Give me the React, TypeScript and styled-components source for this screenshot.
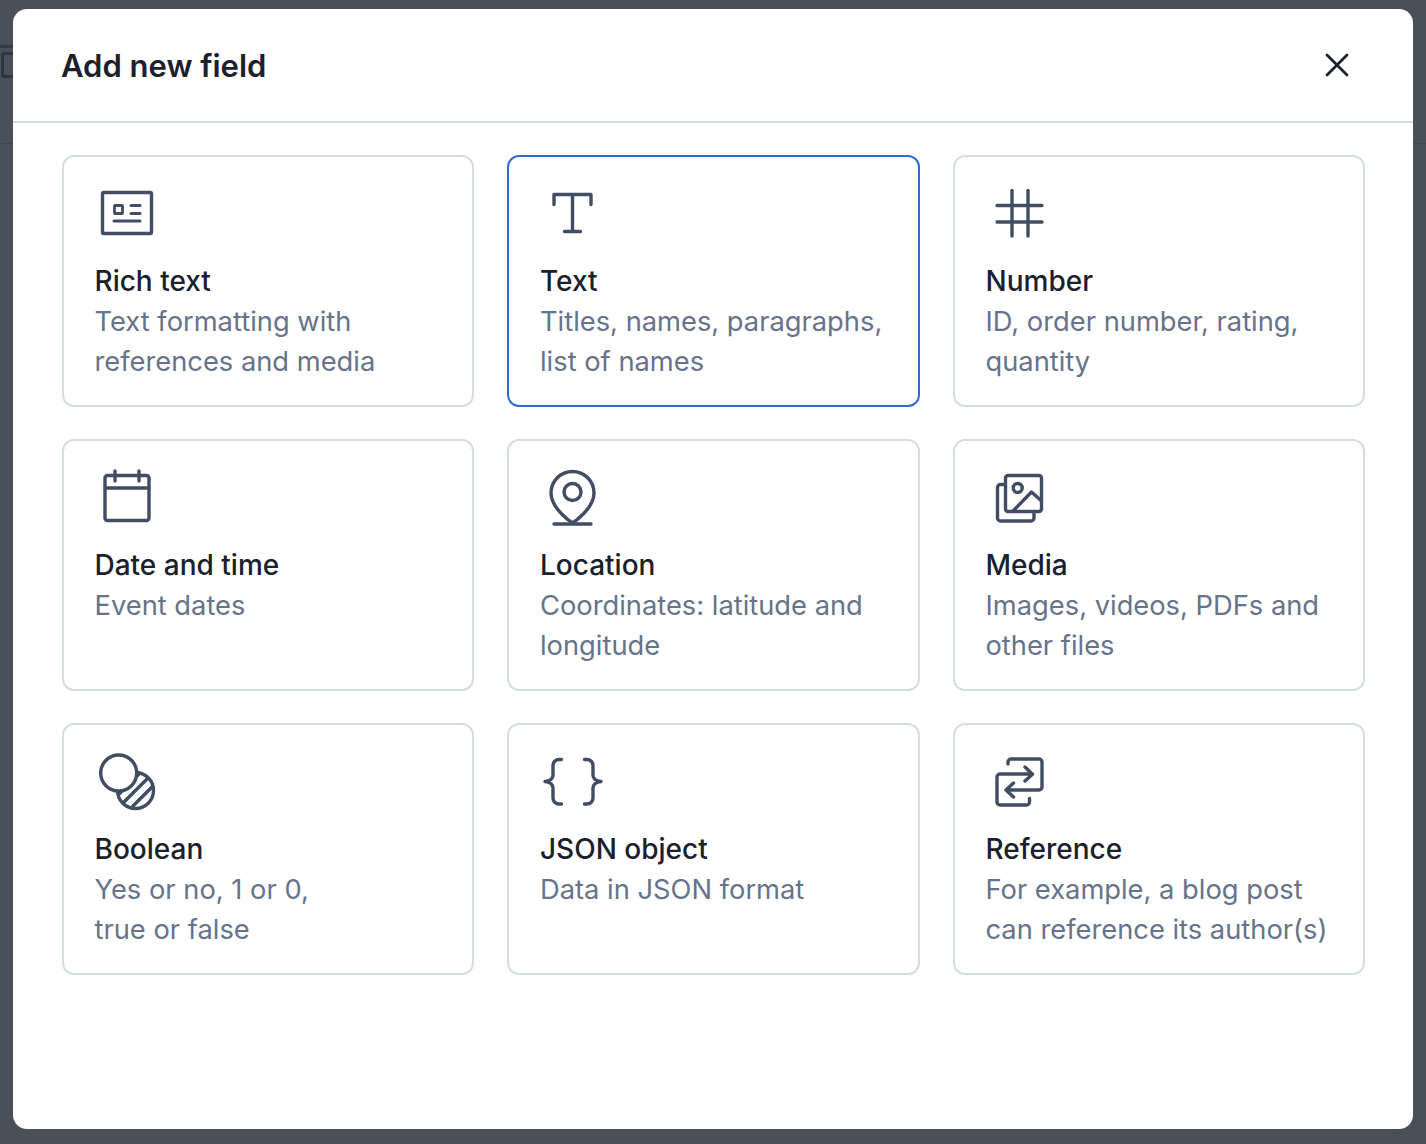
import { ReactNode } from 'react';
import styled, { createGlobalStyle } from 'styled-components';

const GlobalStyle = createGlobalStyle`
  html, body {
    margin: 0;
    padding: 0;
    background: #4a4f58;
  }
  * {
    box-sizing: border-box;
  }
`;

const Icon = ({ children }: { children: ReactNode }) => (
  <IconSvg viewBox="0 0 64 64" fill="none" stroke="#414d63" strokeWidth={3.4} strokeLinecap="round" strokeLinejoin="round">
    {children}
  </IconSvg>
);

const fields = [
  {
    title: 'Rich text',
    lines: ['Text formatting with', 'references and media'],
    icon: (
      <>
        <rect x="7.5" y="11.5" width="49" height="41" rx="1.5" />
        <rect x="19.5" y="24.5" width="8" height="8" rx="0.5" strokeWidth={2.8} />
        <path d="M36 24.5h9M36 32.500h9M19 40h26" strokeWidth={3} />
      </>
    ),
  },
  {
    title: 'Text',
    lines: ['Titles, names, paragraphs,', 'list of names'],
    selected: true,
    icon: <path d="M14 23.500V13.500h37v10M32.500 13.500V50.500M24.500 50.500h16" />,
  },
  {
    title: 'Number',
    lines: ['ID, order number, rating,', 'quantity'],
    icon: <path d="M11 24.500h45M11 41h45M26 9.500v45.500M42 9.500v45.500" />,
  },
  {
    title: 'Date and time',
    lines: ['Event dates'],
    icon: (
      <>
        <rect x="10" y="10.500" width="44" height="45" rx="2.5" />
        <path d="M10 23h44M20 6v10M44 6v10" />
      </>
    ),
  },
  {
    title: 'Location',
    lines: ['Coordinates: latitude and', 'longitude'],
    icon: (
      <>
        <path d="M32.500 58C32.500 58 11 44 11 28a21.500 21.500 0 0 1 43 0C54 44 32.500 58 32.500 58Z" />
        <circle cx="32.500" cy="27" r="8.500" />
        <path d="M14 59h37" />
      </>
    ),
  },
  {
    title: 'Media',
    lines: ['Images, videos, PDFs and', 'other files'],
    icon: (
      <>
        <rect x="19.500" y="10.500" width="36" height="36" rx="2.5" />
        <path d="M18 19.500h-3.500a3 3 0 0 0-3 3V53a3 3 0 0 0 3 3H45a3 3 0 0 0 3-3v-5" />
        <circle cx="31.700" cy="23" r="4.500" />
        <path d="M27 46l18.500-19 9.500 8.500" />
      </>
    ),
  },
  {
    title: 'Boolean',
    lines: ['Yes or no, 1 or 0,', 'true or false'],
    icon: (
      <>
        <defs>
          <clipPath id="boolean-clip">
            <circle cx="40.500" cy="41.500" r="18" />
          </clipPath>
        </defs>
        <g clipPath="url(#boolean-clip)">
          <path d="M14 55L54 15M25 57L65 17M38 57L78 17" />
        </g>
        <circle cx="40.500" cy="41.500" r="18" />
        <circle cx="23.700" cy="24" r="18" fill="#fff" />
      </>
    ),
  },
  {
    title: 'JSON object',
    lines: ['Data in JSON format'],
    icon: (
      <>
        <path d="M21.500 10.500H19a6 6 0 0 0-6 6V26c0 3-2.500 6-8 6.500 5.500.5 8 3.500 8 6.500v10a6 6 0 0 0 6 6h2.500" />
        <path d="M44.500 10.500H47a6 6 0 0 1 6 6V26c0 3 2.500 6 8 6.500-5.500.5-8 3.500-8 6.500v10a6 6 0 0 1-6 6h-2.500" />
      </>
    ),
  },
  {
    title: 'Reference',
    lines: ['For example, a blog post', 'can reference its author(s)'],
    icon: (
      <>
        <path d="M22 15v-2a3 3 0 0 1 3-3h28a3 3 0 0 1 3 3v25a3 3 0 0 1-3 3H20M27.500 34L20 41l7.500 7" />
        <path d="M43.500 49.500V53a3 3 0 0 1-3 3H14a3 3 0 0 1-3-3V28a3 3 0 0 1 3-3h32.500M39 18l7.500 7.300L39 32" />
      </>
    ),
  },
];

function App() {
  return (
    <Page>
      <GlobalStyle />
      <BackdropBar />
      <BackdropBox />
      <BackdropLine />
      <Modal>
        <Header>
          <Title>Add new field</Title>
          <CloseButton aria-label="Close">
            <svg width="24" height="24" viewBox="0 0 24 24" fill="none" stroke="#1a202c" strokeWidth={2.8} strokeLinecap="round">
              <path d="M2 2l20 20M22 2L2 22" />
            </svg>
          </CloseButton>
        </Header>
        <Grid>
          {fields.map((f) => (
            <Card key={f.title} $selected={f.selected}>
              <Icon>{f.icon}</Icon>
              <CardTitle>{f.title}</CardTitle>
              {f.lines.map((l) => (
                <CardLine key={l}>{l}</CardLine>
              ))}
            </Card>
          ))}
        </Grid>
      </Modal>
    </Page>
  );
}

const Page = styled.div`
  position: relative;
  width: 1426px;
  height: 1144px;
  padding: 9px 13px 15px;
  overflow: hidden;
  background: #4a4f58;
  font-family: Inter, "Liberation Sans", sans-serif;
`;

const BackdropBar = styled.div`
  position: absolute;
  left: 0;
  top: 45px;
  width: 20px;
  height: 3px;
  background: #343a46;
`;

const BackdropBox = styled.div`
  position: absolute;
  left: 1px;
  top: 52px;
  width: 20px;
  height: 26px;
  border: 3px solid #2f3541;
  border-radius: 3px;
`;

const BackdropLine = styled.div`
  position: absolute;
  left: 0;
  right: 0;
  top: 143px;
  height: 1px;
  background: #42474f;
`;

const Modal = styled.div`
  position: relative;
  height: 100%;
  background: #fff;
  border-radius: 14px;
`;

const Header = styled.div`
  display: flex;
  align-items: center;
  justify-content: space-between;
  height: 114px;
  padding: 1px 64px 0 48px;
  border-bottom: 2px solid #d5dce4;
`;

const Title = styled.h2`
  margin: 0;
  font-size: 31px;
  line-height: 40px;
  font-weight: 600;
  color: #1a202c;
`;

const CloseButton = styled.button`
  display: flex;
  margin-top: -2px;
  padding: 0;
  border: none;
  background: none;
`;

const Grid = styled.div`
  display: grid;
  grid-template-columns: repeat(3, 412.5px);
  grid-auto-rows: 252px;
  gap: 32px 33px;
  padding: 32px 0 0 48.5px;
`;

const Card = styled.div<{ $selected?: boolean }>`
  padding: 24px 31px;
  border: 2px solid ${(p) => (p.$selected ? '#2f6bd0' : '#d5dce4')};
  border-radius: 12px;
`;

const IconSvg = styled.svg`
  display: block;
  width: 64px;
  height: 64px;
  margin: 0 0 16px;
  overflow: visible;
`;

const CardTitle = styled.div`
  margin-bottom: 1px;
  font-size: 28px;
  line-height: 40px;
  font-weight: 500;
  color: #1a202c;
`;

const CardLine = styled.div`
  font-size: 27.3px;
  line-height: 40px;
  font-weight: 400;
  color: #667389;
  white-space: nowrap;
`;

export default App;
